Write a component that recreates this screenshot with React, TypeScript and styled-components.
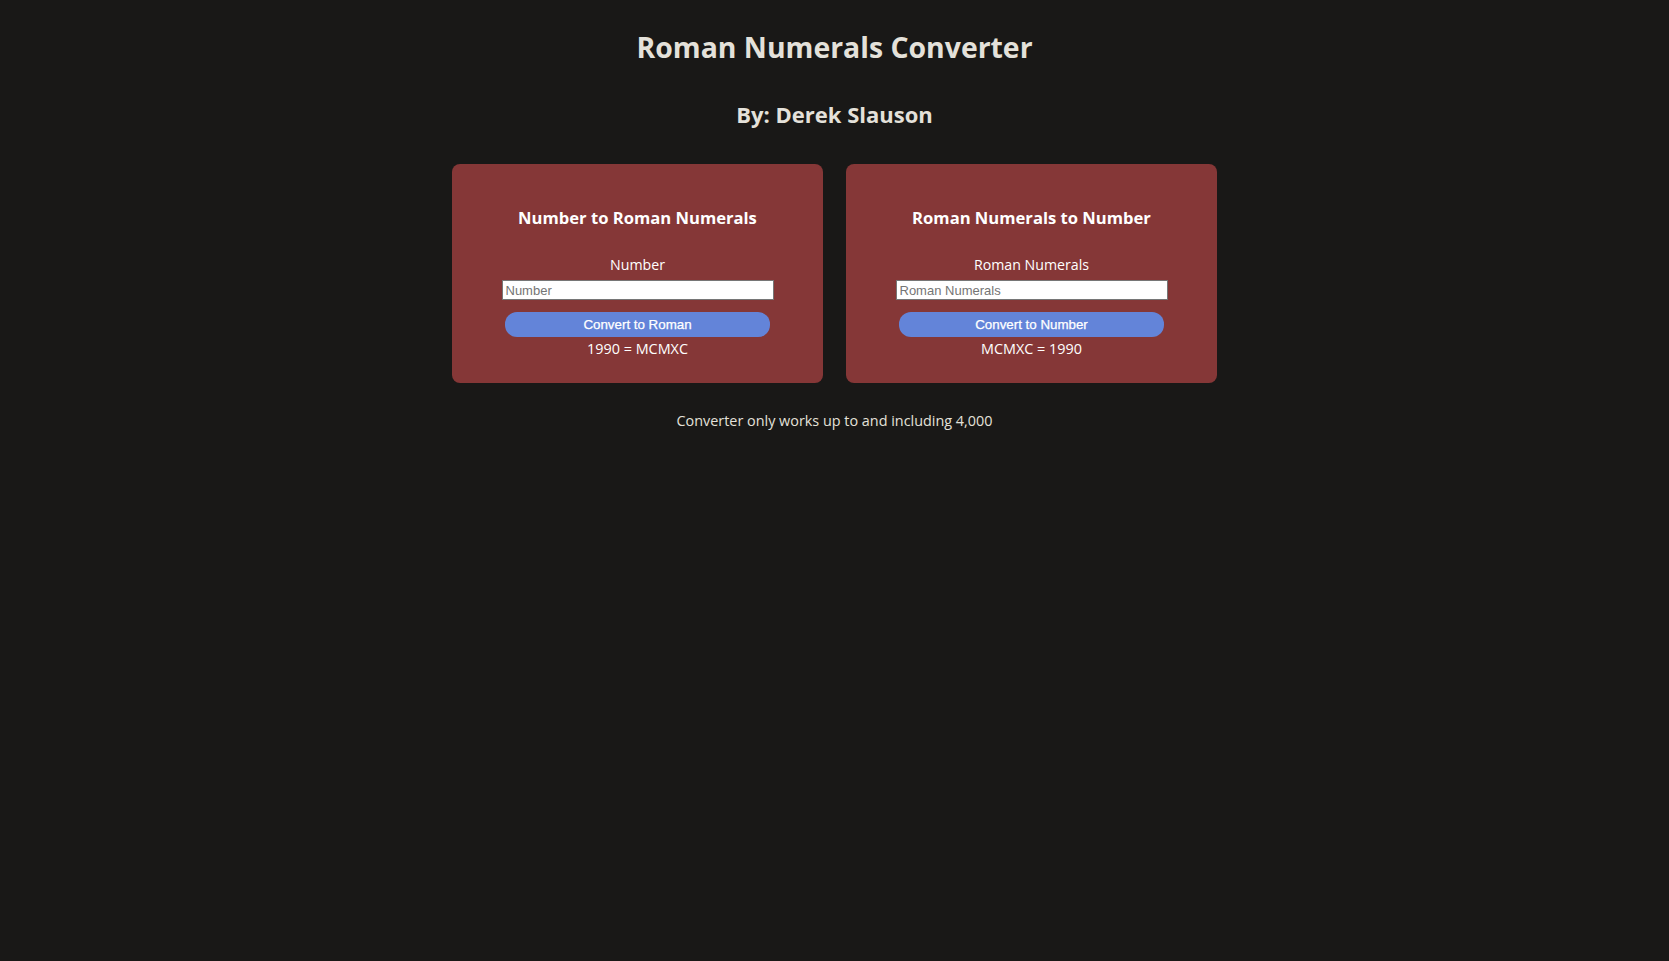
import React from "react";
import styled, { createGlobalStyle } from "styled-components";

const Global = createGlobalStyle`
  html, body { margin: 0; padding: 0; background: #191817; }
  body { font-family: "Open Sans", "Noto Sans", sans-serif; color: #e4e1da; }
`;

const Page = styled.main`
  min-height: 100vh;
  display: flex;
  flex-direction: column;
  align-items: center;
  padding-top: 25px;
  box-sizing: border-box;
`;

const Title = styled.h1`
  margin: 0;
  font-size: 28.4px;
  line-height: 44px;
  font-weight: 700;
  color: #e4e1da;
`;

const Byline = styled.h2`
  margin: 29px 0 0;
  font-size: 22px;
  line-height: 32px;
  font-weight: 700;
  color: #e4e1da;
`;

const Cards = styled.div`
  display: flex;
  gap: 23px;
  margin-top: 34px;
`;

const Card = styled.section`
  width: 371px;
  height: 219px;
  box-sizing: border-box;
  background: #853737;
  border-radius: 8px;
  display: flex;
  flex-direction: column;
  align-items: center;
  padding-top: 41px;
`;

const CardTitle = styled.h3`
  margin: 0;
  font-size: 16.6px;
  line-height: 26px;
  font-weight: 700;
  color: #ffffff;
`;

const Label = styled.label`
  margin-top: 24px;
  font-size: 14.2px;
  line-height: 20px;
  color: #ffffff;
`;

const Input = styled.input`
  margin-top: 5px;
  width: 272px;
  height: 20px;
  box-sizing: border-box;
  border: 1px solid #767676;
  padding: 1px 3px;
  font-family: "Liberation Sans", Arial, sans-serif;
  font-size: 13px;
  background: #fff;
  &::placeholder { color: #757575; }
`;

const Button = styled.button`
  margin-top: 12px;
  width: 265px;
  height: 25px;
  border: none;
  border-radius: 12px;
  background: #6384d9;
  color: #ffffff;
  font-family: "Liberation Sans", Arial, sans-serif;
  font-size: 13.333px;
  font-weight: 400;
  -webkit-text-stroke: 0.25px #ffffff;
  cursor: pointer;
`;

const Result = styled.p`
  margin: 2px 0 0;
  font-size: 14.4px;
  line-height: 20px;
  color: #ffffff;
`;

const Note = styled.p`
  margin: 28px 0 0;
  font-size: 14.4px;
  line-height: 20px;
  color: #e4e1da;
`;

type ConverterProps = {
  title: string;
  label: string;
  button: string;
  result: string;
};

const Converter = ({ title, label, button, result }: ConverterProps) => (
  <Card>
    <CardTitle>{title}</CardTitle>
    <Label>{label}</Label>
    <Input placeholder={label} />
    <Button>{button}</Button>
    <Result>{result}</Result>
  </Card>
);

export default function App() {
  return (
    <>
      <Global />
      <Page>
        <Title>Roman Numerals Converter</Title>
        <Byline>By: Derek Slauson</Byline>
        <Cards>
          <Converter
            title="Number to Roman Numerals"
            label="Number"
            button="Convert to Roman"
            result="1990 = MCMXC"
          />
          <Converter
            title="Roman Numerals to Number"
            label="Roman Numerals"
            button="Convert to Number"
            result="MCMXC = 1990"
          />
        </Cards>
        <Note>Converter only works up to and including 4,000</Note>
      </Page>
    </>
  );
}
